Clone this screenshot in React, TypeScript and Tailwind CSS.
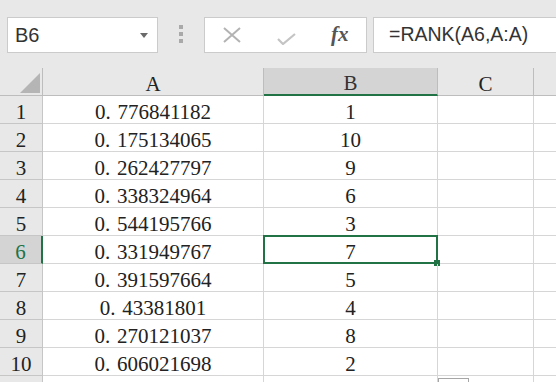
import React from 'react';

const rows: [string, string][] = [
  ['0', '776841182', '1'],
  ['0', '175134065', '10'],
  ['0', '262427797', '9'],
  ['0', '338324964', '6'],
  ['0', '544195766', '3'],
  ['0', '331949767', '7'],
  ['0', '391597664', '5'],
  ['0', '43381801', '4'],
  ['0', '270121037', '8'],
  ['0', '606021698', '2'],
].map(([a, b, c]) => [`${a}.${b}`, c]) as [string, string][];

function Num({ value }: { value: string }) {
  const [int, frac] = value.split('.');
  return (
    <span>
      {int}
      <span className="inline-block w-[12px]">.</span>
      {frac}
    </span>
  );
}

export default function App() {
  const serif = { fontFamily: '"Liberation Serif", "DejaVu Serif", serif' };
  const cell = 'flex items-end justify-center border-r border-b border-[#d6d6d6] h-[28px] text-[21px] leading-[22px] text-[#222]';

  return (
    <div className="relative w-[556px] h-[382px] overflow-hidden bg-white" style={{ fontFamily: '"Liberation Sans", Arial, sans-serif' }}>
      {/* formula bar */}
      <div className="flex items-start h-[68px] bg-[#e8e8e8] pt-[17px] pl-[7px]">
        <div className="flex items-center justify-between w-[151px] h-[36px] bg-white border border-[#cbcbcb] pl-[7px] pr-[9px]">
          <span className="text-[20px] text-[#333]">B6</span>
          <svg width="8" height="5" viewBox="0 0 8 5">
            <path d="M0 0h8L4 5z" fill="#6a6a6a" />
          </svg>
        </div>
        <div className="flex flex-col items-center gap-[3px] w-[46px] pt-[8px]">
          <div className="w-[4px] h-[4px] bg-[#a9a9a9]" />
          <div className="w-[4px] h-[4px] bg-[#a9a9a9]" />
          <div className="w-[4px] h-[4px] bg-[#a9a9a9]" />
        </div>
        <div className="flex items-center w-[163px] h-[36px] bg-white border border-[#cbcbcb]">
          <svg className="ml-[18px]" width="18" height="16" viewBox="0 0 18 16">
            <path d="M1 1l16 14M17 1L1 15" stroke="#b3b3b3" strokeWidth="2" fill="none" />
          </svg>
          <svg className="ml-[36px] mt-[8px]" width="19" height="12" viewBox="0 0 19 12">
            <path d="M1 6l5 5L18 1" stroke="#c4c4c4" strokeWidth="2.2" fill="none" />
          </svg>
          <span className="ml-[35px] text-[21px] italic font-bold text-[#555]" style={serif}>fx</span>
        </div>
        <div className="flex items-center flex-1 h-[36px] ml-[6px] bg-white border border-r-0 border-[#cbcbcb] pl-[15px]">
          <span className="text-[19.5px] text-[#333]">=RANK(A6,A:A)</span>
        </div>
      </div>

      {/* sheet grid */}
      <div className="grid grid-cols-[43px_221px_174px_96px_22px]" style={serif}>
        {/* header row */}
        <div className="flex items-end justify-end h-[28px] bg-[#e8e8e8] border-r border-b border-[#bdbdbd] pr-[2px] pb-[2px]">
          <svg width="20" height="20" viewBox="0 0 20 20">
            <path d="M20 0V20H0z" fill="#b5b5b5" />
          </svg>
        </div>
        <div className="flex items-end justify-center h-[28px] bg-[#e8e8e8] border-r border-b border-[#bdbdbd] text-[21px] leading-[22px] text-[#222]">A</div>
        <div className="flex items-end justify-center h-[28px] bg-[#d4d4d4] border-r border-[#bdbdbd] border-b-2 border-b-[#217346] text-[21px] leading-[22px] text-[#333]">B</div>
        <div className="flex items-end justify-center h-[28px] bg-[#e8e8e8] border-r border-b border-[#bdbdbd] text-[21px] leading-[22px] text-[#222]">C</div>
        <div className="h-[28px] bg-[#e8e8e8] border-b border-[#bdbdbd]" />

        {rows.map(([a, b], i) => {
          const sel = i === 5;
          return (
            <React.Fragment key={i}>
              <div
                className={
                  sel
                    ? 'flex items-end justify-center h-[28px] bg-[#d4d4d4] border-r-2 border-r-[#217346] border-b border-[#c6c6c6] text-[21px] leading-[22px] text-[#217346]'
                    : 'flex items-end justify-center h-[28px] bg-[#e8e8e8] border-r border-b border-[#c6c6c6] text-[21px] leading-[22px] text-[#222]'
                }
              >
                {i + 1}
              </div>
              <div className={cell}>
                <Num value={a} />
              </div>
              <div className={`${cell} relative`}>
                {b}
                {sel && (
                  <div className="absolute -top-[1px] -left-[1px] -right-[1px] -bottom-[1px] border-2 border-[#217346]">
                    <div className="absolute -right-[4px] -bottom-[4px] w-[6px] h-[6px] bg-[#217346]" />
                  </div>
                )}
              </div>
              <div className={cell} />
              <div className="h-[28px] border-b border-[#d6d6d6]" />
            </React.Fragment>
          );
        })}

        <div className="h-[28px] bg-[#e8e8e8] border-r border-[#c6c6c6]" />
        <div className="h-[28px] border-r border-[#d6d6d6]" />
        <div className="h-[28px] border-r border-[#d6d6d6]" />
        <div className="relative h-[28px] border-r border-[#d6d6d6]">
          <div className="absolute left-0 top-[2px] w-[31px] h-[20px] bg-white border border-[#a6a6a6]" />
        </div>
        <div className="h-[28px]" />
      </div>
    </div>
  );
}
